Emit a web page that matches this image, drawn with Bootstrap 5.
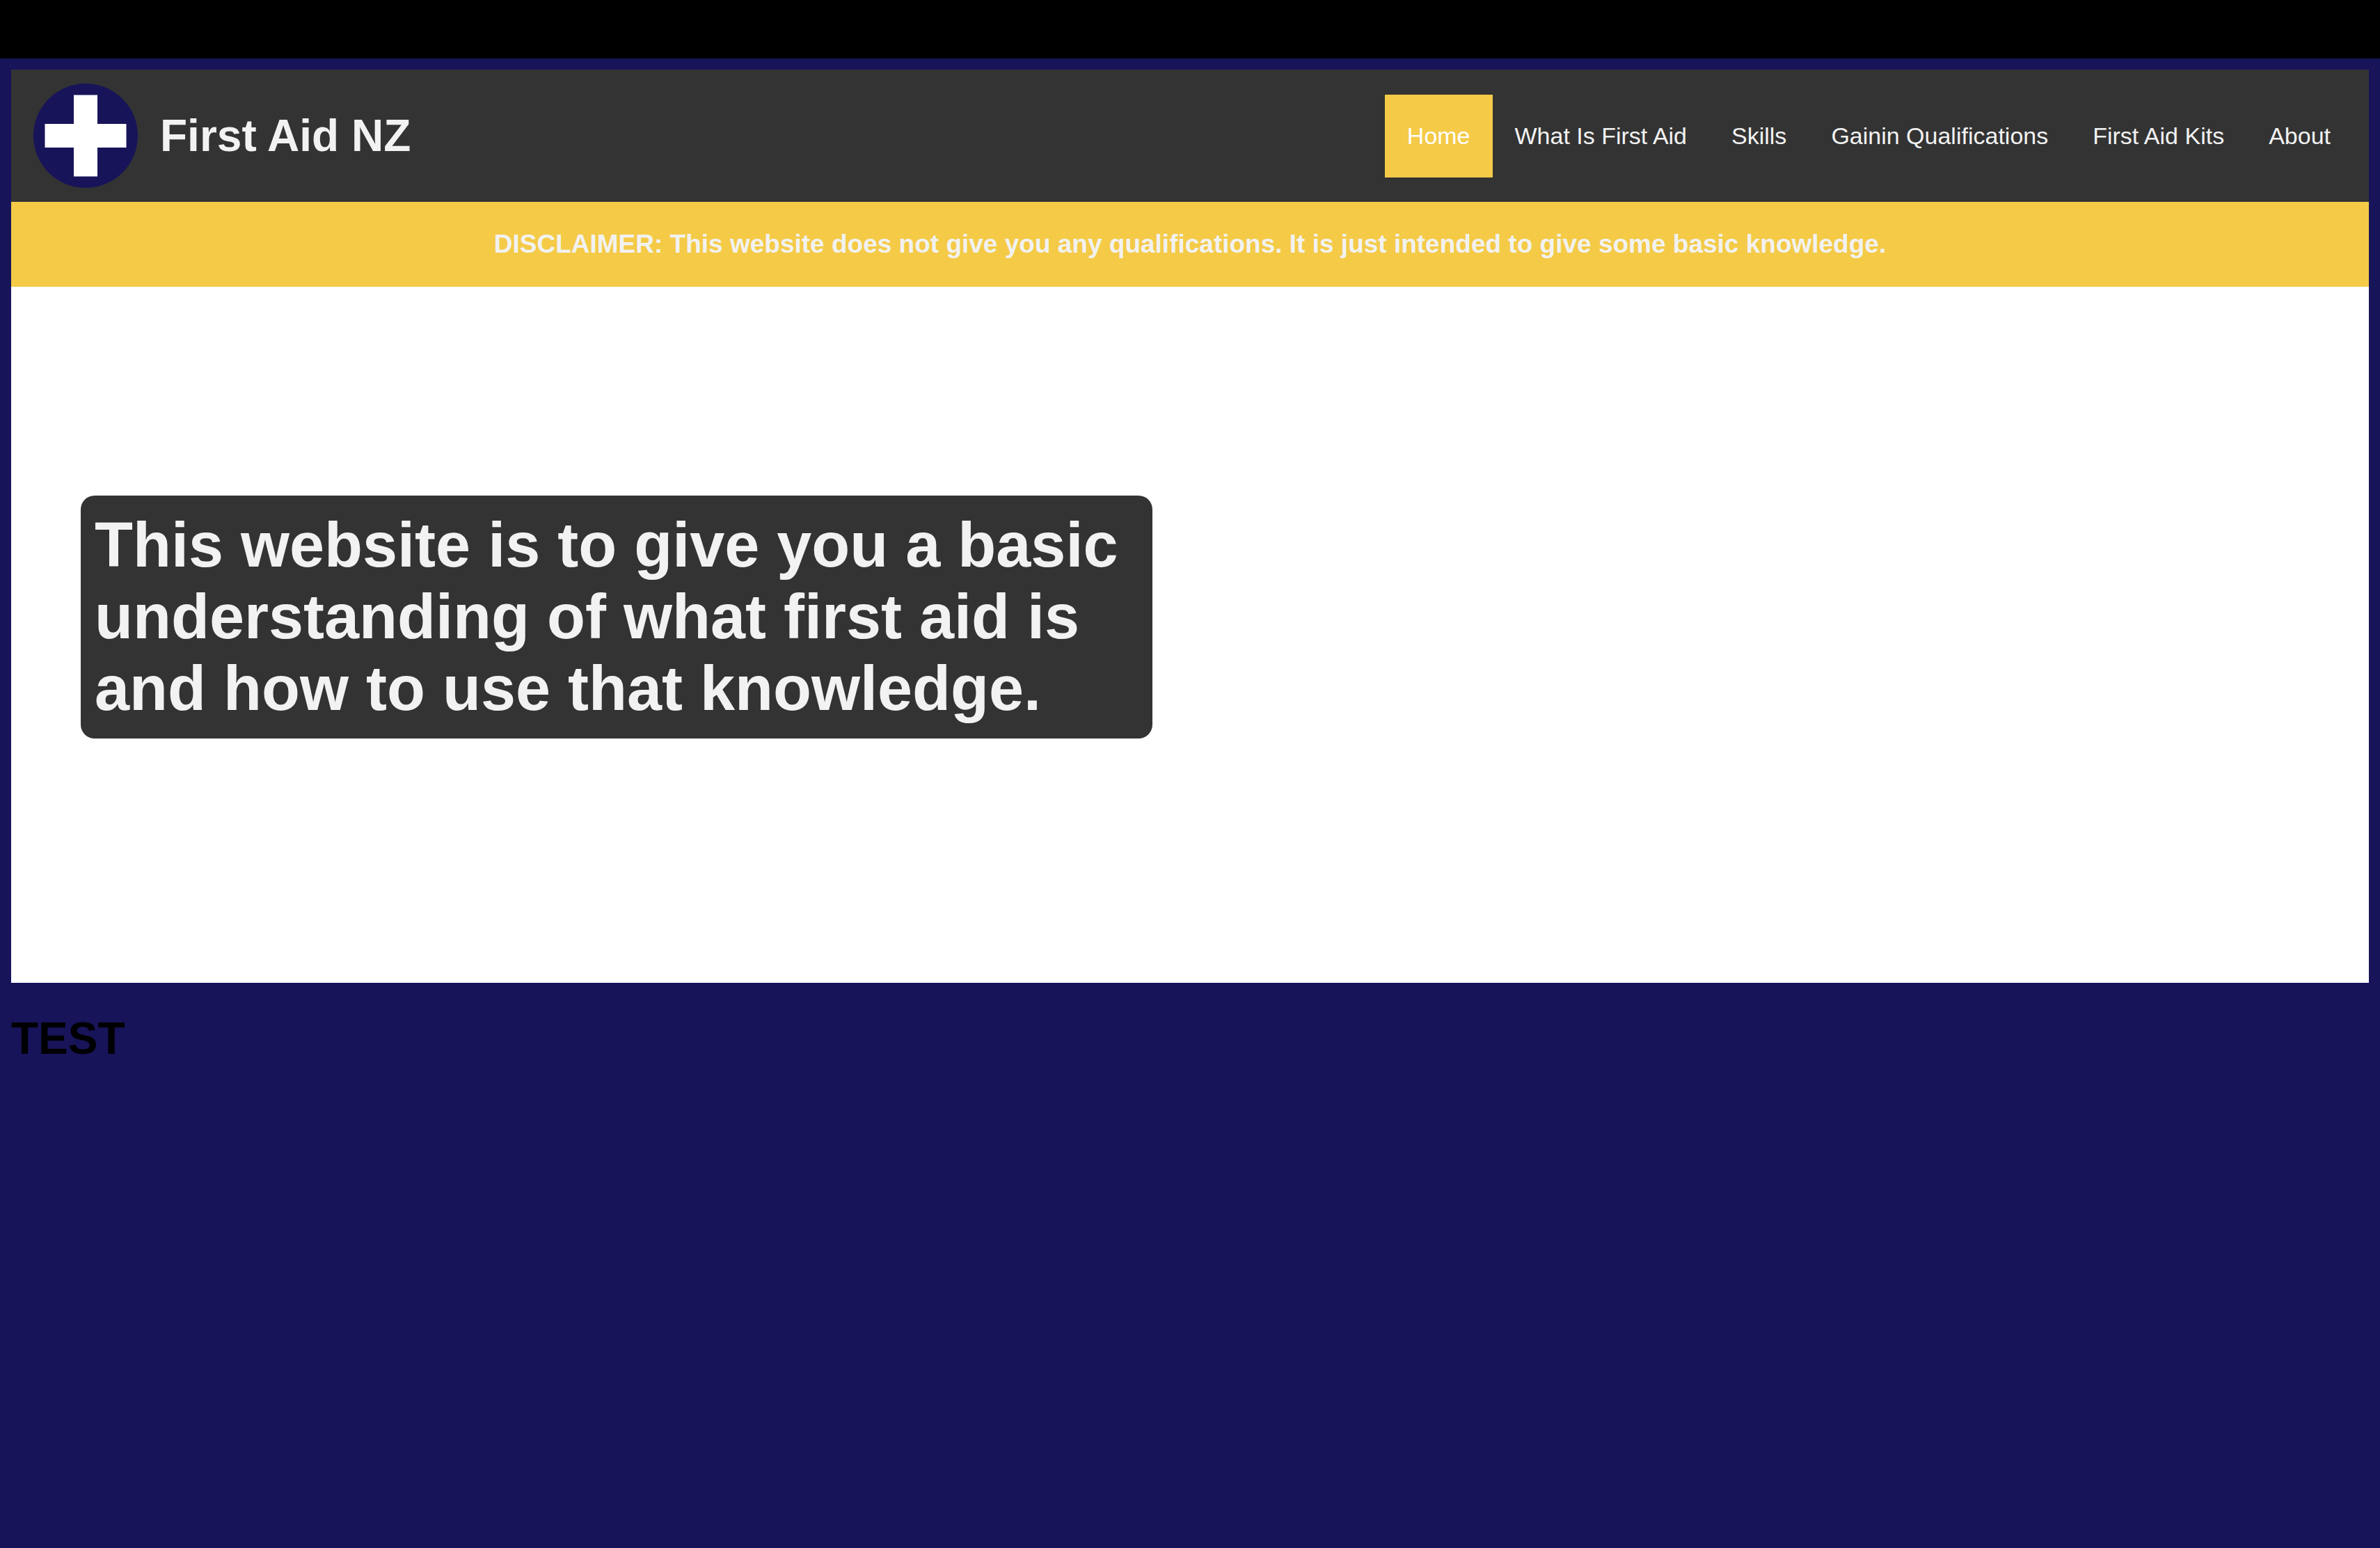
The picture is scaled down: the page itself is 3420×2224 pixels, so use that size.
<!DOCTYPE html>
<html lang="en">
<head>
<meta charset="utf-8">
<meta name="viewport" content="width=device-width, initial-scale=1">
<title>First Aid NZ</title>
<link href="https://cdn.jsdelivr.net/npm/bootstrap@5.3.0/dist/css/bootstrap.min.css" rel="stylesheet">
<style>
  :root { --navy: #17145a; --charcoal: #333333; --gold: #f4ca47; --paper: #f2f2f2; }
  body { background: var(--navy); color: #000; font-family: "Liberation Sans", Arial, sans-serif; min-height: 100vh; }
  .top-strip { height: 84px; background: #000; }
  .page { padding: 16px; }
  .site-header { background: var(--charcoal); padding: 20px 23px 20px 32px; }
  .navbar-brand { gap: 32px; color: var(--paper); }
  .navbar-brand:hover { color: #fff; }
  .logo { width: 150px; height: 150px; }
  .title-text { font-size: 64px; line-height: 74px; font-weight: 700; }
  .site-header .nav-link { color: var(--paper); font-size: 34px; line-height: 39px; padding: 40px 32px; }
  .site-header .nav-link.active, .site-header .nav-link:hover { background: var(--gold); color: #fff; }
  .disclaimer { background: var(--gold); color: var(--paper); font-size: 37px; line-height: 42px; padding: 40px 16px; }
  .hero { min-height: 1000px; padding: 300px 100px; }
  .hero-text { max-width: 1540px; padding: 20px; border-radius: 20px; background: var(--charcoal); color: var(--paper); font-size: 90px; line-height: 103px; }
  .test-title { margin-top: 43px; }
</style>
<script src="https://cdn.jsdelivr.net/npm/bootstrap@5.3.0/dist/js/bootstrap.bundle.min.js" defer></script>
</head>
<body>
<div class="top-strip"></div>
<div class="page">
  <header class="site-header navbar navbar-expand">
    <a class="navbar-brand d-flex align-items-center p-0 m-0" href="#">
      <svg class="logo" viewBox="0 0 150 150" aria-hidden="true">
        <circle cx="75" cy="75" r="75" fill="#17145a"/>
        <path fill="#fff" d="M58 16.5h34v41.5h41.5v34H92v41.5H58V92H16.5V58H58z"/>
      </svg>
      <span class="title-text">First Aid NZ</span>
    </a>
    <nav class="ms-auto" aria-label="Main">
      <ul class="nav">
        <li class="nav-item"><a class="nav-link active" aria-current="page" href="#">Home</a></li>
        <li class="nav-item"><a class="nav-link" href="#">What Is First Aid</a></li>
        <li class="nav-item"><a class="nav-link" href="#">Skills</a></li>
        <li class="nav-item"><a class="nav-link" href="#">Gainin Qualifications</a></li>
        <li class="nav-item"><a class="nav-link" href="#">First Aid Kits</a></li>
        <li class="nav-item"><a class="nav-link" href="#">About</a></li>
      </ul>
    </nav>
  </header>
  <h3 class="disclaimer text-center fw-bold m-0">DISCLAIMER: This website does not give you any qualifications. It is just intended to give some basic knowledge.</h3>
  <main>
    <section class="hero bg-white">
      <h2 class="hero-text fw-bold m-0">This website is to give you a basic understanding of what first aid is and how to use that knowledge.</h2>
    </section>
    <h1 class="title-text test-title mb-0">TEST</h1>
  </main>
</div>
</body>
</html>
